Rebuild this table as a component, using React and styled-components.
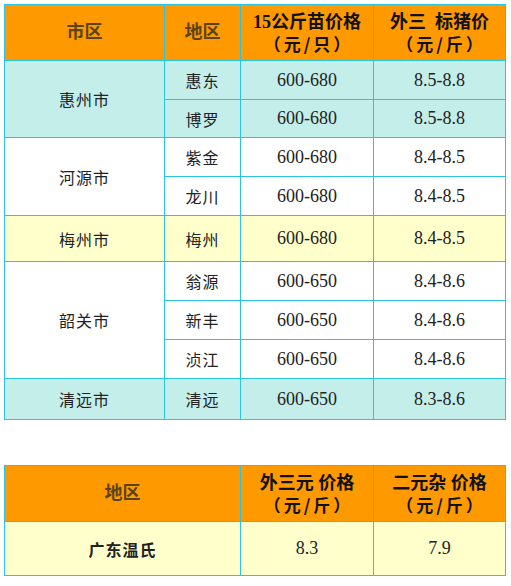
import React from "react";
import styled, { createGlobalStyle } from "styled-components";

const GlobalStyle = createGlobalStyle`
  body {
    margin: 0;
    background: #ffffff;
    font-family: "Liberation Serif", "Noto Sans CJK SC", serif;
  }
`;

const Page = styled.div`
  padding: 4px 0 0 4px;
  display: flex;
  flex-direction: column;
  gap: 45px;
`;

const Table = styled.table`
  width: 501px;
  table-layout: fixed;
  border-collapse: collapse;
  border: 1px solid #29c5e6;
`;

const Row = styled.tr`
  height: ${({ h }) => h}px;
`;

const Head = styled.th`
  background: #ff9900;
  border: 1px solid #29c5e6;
  padding: 0;
  font-size: 18px;
  font-weight: bold;
  line-height: 21px;
  color: ${({ muted }) => (muted ? "#5a4417" : "#111111")};
  text-align: center;
  vertical-align: middle;
`;

const Unit = styled.span`
  display: block;
  font-family: "Noto Sans CJK SC", "Liberation Serif", sans-serif;
  font-size: 17px;
  letter-spacing: 3px;
  text-indent: 3px;
`;

const bg = { cyan: "#c3eeea", yellow: "#ffffcc", white: "#ffffff" };

const Cell = styled.td`
  background: ${({ tone }) => bg[tone] || bg.white};
  border: 1px solid #29c5e6;
  padding: 0;
  text-align: center;
  vertical-align: middle;
  color: #222222;
  font-size: ${({ num }) => (num ? "18px" : "16px")};
  font-weight: ${({ strong }) => (strong ? "bold" : "normal")};
  letter-spacing: ${({ num }) => (num ? "0" : "1px")};
`;

const cities = [
  {
    city: "惠州市",
    tone: "cyan",
    rows: [
      ["惠东", "600-680", "8.5-8.8", 39],
      ["博罗", "600-680", "8.5-8.8", 38],
    ],
  },
  {
    city: "河源市",
    tone: "white",
    rows: [
      ["紫金", "600-680", "8.4-8.5", 39],
      ["龙川", "600-680", "8.4-8.5", 39],
    ],
  },
  {
    city: "梅州市",
    tone: "yellow",
    rows: [["梅州", "600-680", "8.4-8.5", 46]],
  },
  {
    city: "韶关市",
    tone: "white",
    rows: [
      ["翁源", "600-650", "8.4-8.6", 39],
      ["新丰", "600-650", "8.4-8.6", 39],
      ["浈江", "600-650", "8.4-8.6", 39],
    ],
  },
  {
    city: "清远市",
    tone: "cyan",
    rows: [["清远", "600-650", "8.3-8.6", 41]],
  },
];

const Cols = () => (
  <colgroup>
    <col style={{ width: 160 }} />
    <col style={{ width: 76 }} />
    <col style={{ width: 133 }} />
    <col style={{ width: 132 }} />
  </colgroup>
);

const PriceTable = () => (
  <Table>
    <Cols />
    <thead>
      <Row h={56}>
        <Head muted>市区</Head>
        <Head muted>地区</Head>
        <Head>
          15公斤苗价格
          <Unit>（元/只）</Unit>
        </Head>
        <Head>
          外三&nbsp;&nbsp;标猪价
          <Unit>（元/斤）</Unit>
        </Head>
      </Row>
    </thead>
    <tbody>
      {cities.map(({ city, tone, rows }) =>
        rows.map(([area, piglet, hog, h], i) => (
          <Row key={area} h={h}>
            {i === 0 && (
              <Cell tone={tone} rowSpan={rows.length}>
                {city}
              </Cell>
            )}
            <Cell tone={tone}>{area}</Cell>
            <Cell tone={tone} num>
              {piglet}
            </Cell>
            <Cell tone={tone} num>
              {hog}
            </Cell>
          </Row>
        ))
      )}
    </tbody>
  </Table>
);

const CompanyTable = () => (
  <Table>
    <Cols />
    <thead>
      <Row h={56}>
        <Head muted colSpan={2}>
          地区
        </Head>
        <Head>
          外三元 价格
          <Unit>（元/斤）</Unit>
        </Head>
        <Head>
          二元杂 价格
          <Unit>（元/斤）</Unit>
        </Head>
      </Row>
    </thead>
    <tbody>
      <Row h={54}>
        <Cell tone="yellow" colSpan={2} strong>
          广东温氏
        </Cell>
        <Cell tone="yellow" num>
          8.3
        </Cell>
        <Cell tone="yellow" num>
          7.9
        </Cell>
      </Row>
    </tbody>
  </Table>
);

export default function App() {
  return (
    <>
      <GlobalStyle />
      <Page>
        <PriceTable />
        <CompanyTable />
      </Page>
    </>
  );
}
